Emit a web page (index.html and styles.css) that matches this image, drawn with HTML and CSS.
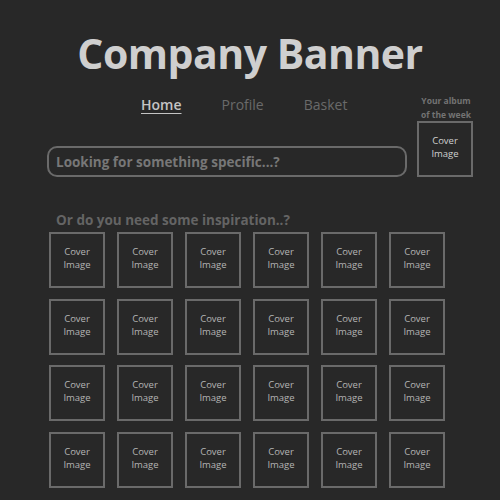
FILE: index.html
```html
<!DOCTYPE html>
<html>
<head>
  <title>Company Banner</title>
  <link rel="stylesheet" href="styles.css">
</head>
<body>
  <h1 class="banner">Company Banner</h1>

  <div class="top">
    <div class="main">
      <nav class="nav">
        <a href="#" class="active">Home</a>
        <a href="#">Profile</a>
        <a href="#">Basket</a>
      </nav>
      <input type="text" class="search" placeholder="Looking for something specific...?">
    </div>
    <div class="album">
      <p class="album-title">Your album<br>of the week</p>
      <div class="cover">Cover<br>Image</div>
    </div>
  </div>

  <p class="inspire">Or do you need some inspiration..?</p>

  <div class="grid">
    <div class="cover">Cover<br>Image</div>
    <div class="cover">Cover<br>Image</div>
    <div class="cover">Cover<br>Image</div>
    <div class="cover">Cover<br>Image</div>
    <div class="cover">Cover<br>Image</div>
    <div class="cover">Cover<br>Image</div>
    <div class="cover">Cover<br>Image</div>
    <div class="cover">Cover<br>Image</div>
    <div class="cover">Cover<br>Image</div>
    <div class="cover">Cover<br>Image</div>
    <div class="cover">Cover<br>Image</div>
    <div class="cover">Cover<br>Image</div>
    <div class="cover">Cover<br>Image</div>
    <div class="cover">Cover<br>Image</div>
    <div class="cover">Cover<br>Image</div>
    <div class="cover">Cover<br>Image</div>
    <div class="cover">Cover<br>Image</div>
    <div class="cover">Cover<br>Image</div>
    <div class="cover">Cover<br>Image</div>
    <div class="cover">Cover<br>Image</div>
    <div class="cover">Cover<br>Image</div>
    <div class="cover">Cover<br>Image</div>
    <div class="cover">Cover<br>Image</div>
    <div class="cover">Cover<br>Image</div>
  </div>
</body>
</html>
```

FILE: styles.css
```css
html, body {
  background-color: #282828;
}

body {
  font-family: "Open Sans", "Noto Sans", sans-serif;
  margin: 0;
  padding: 0 0 0 47px;
  width: 430px;
  overflow: hidden;
}

.banner {
  margin: 27px 0 0 -47px;
  width: 500px;
  text-align: center;
  font-size: 41px;
  font-weight: 700;
  color: #cfcfcf;
  line-height: 52px;
  letter-spacing: -0.5px;
}

.top {
  display: flex;
  gap: 10px;
  margin-top: 12px;
}

.main {
  width: 360px;
}

.nav {
  display: flex;
  gap: 40px;
  padding: 5px 0 0 94px;
  height: 34px;
  box-sizing: border-box;
}

.nav a {
  color: #6a6a6a;
  font-size: 14px;
  line-height: 18px;
  text-decoration: none;
}

.nav a.active {
  color: #c4c4c4;
  font-weight: 600;
  text-decoration: underline;
  text-underline-offset: 3px;
}

.search {
  display: block;
  width: 360px;
  height: 31px;
  margin-top: 21px;
  box-sizing: border-box;
  background: transparent;
  border: 2px solid #6a6a6a;
  border-radius: 10px;
  padding: 0 7px;
  font-family: inherit;
  font-size: 13.5px;
  font-weight: 700;
  color: #777;
}

.search::placeholder {
  color: #777;
}

.album {
  width: 56px;
}

.album-title {
  margin: 3px 0 0 -1px;
  width: 60px;
  text-align: center;
  font-size: 8.5px;
  font-weight: 700;
  line-height: 14px;
  color: #737373;
}

.album .cover {
  margin-top: -1px;
  color: #cfcfcf;
}

.inspire {
  margin: 34px 0 3px 9px;
  font-size: 13.5px;
  font-weight: 700;
  line-height: 18px;
  color: #646464;
}

.cover {
  width: 56px;
  height: 56px;
  box-sizing: border-box;
  border: 2px solid #6a6a6a;
  display: flex;
  align-items: center;
  justify-content: center;
  text-align: center;
  font-size: 9.5px;
  line-height: 13px;
  color: #b4b4b4;
  padding-bottom: 4px;
}

.grid {
  display: grid;
  grid-template-columns: repeat(6, 56px);
  column-gap: 12px;
  row-gap: 10.5px;
  margin-left: 2px;
}
```
